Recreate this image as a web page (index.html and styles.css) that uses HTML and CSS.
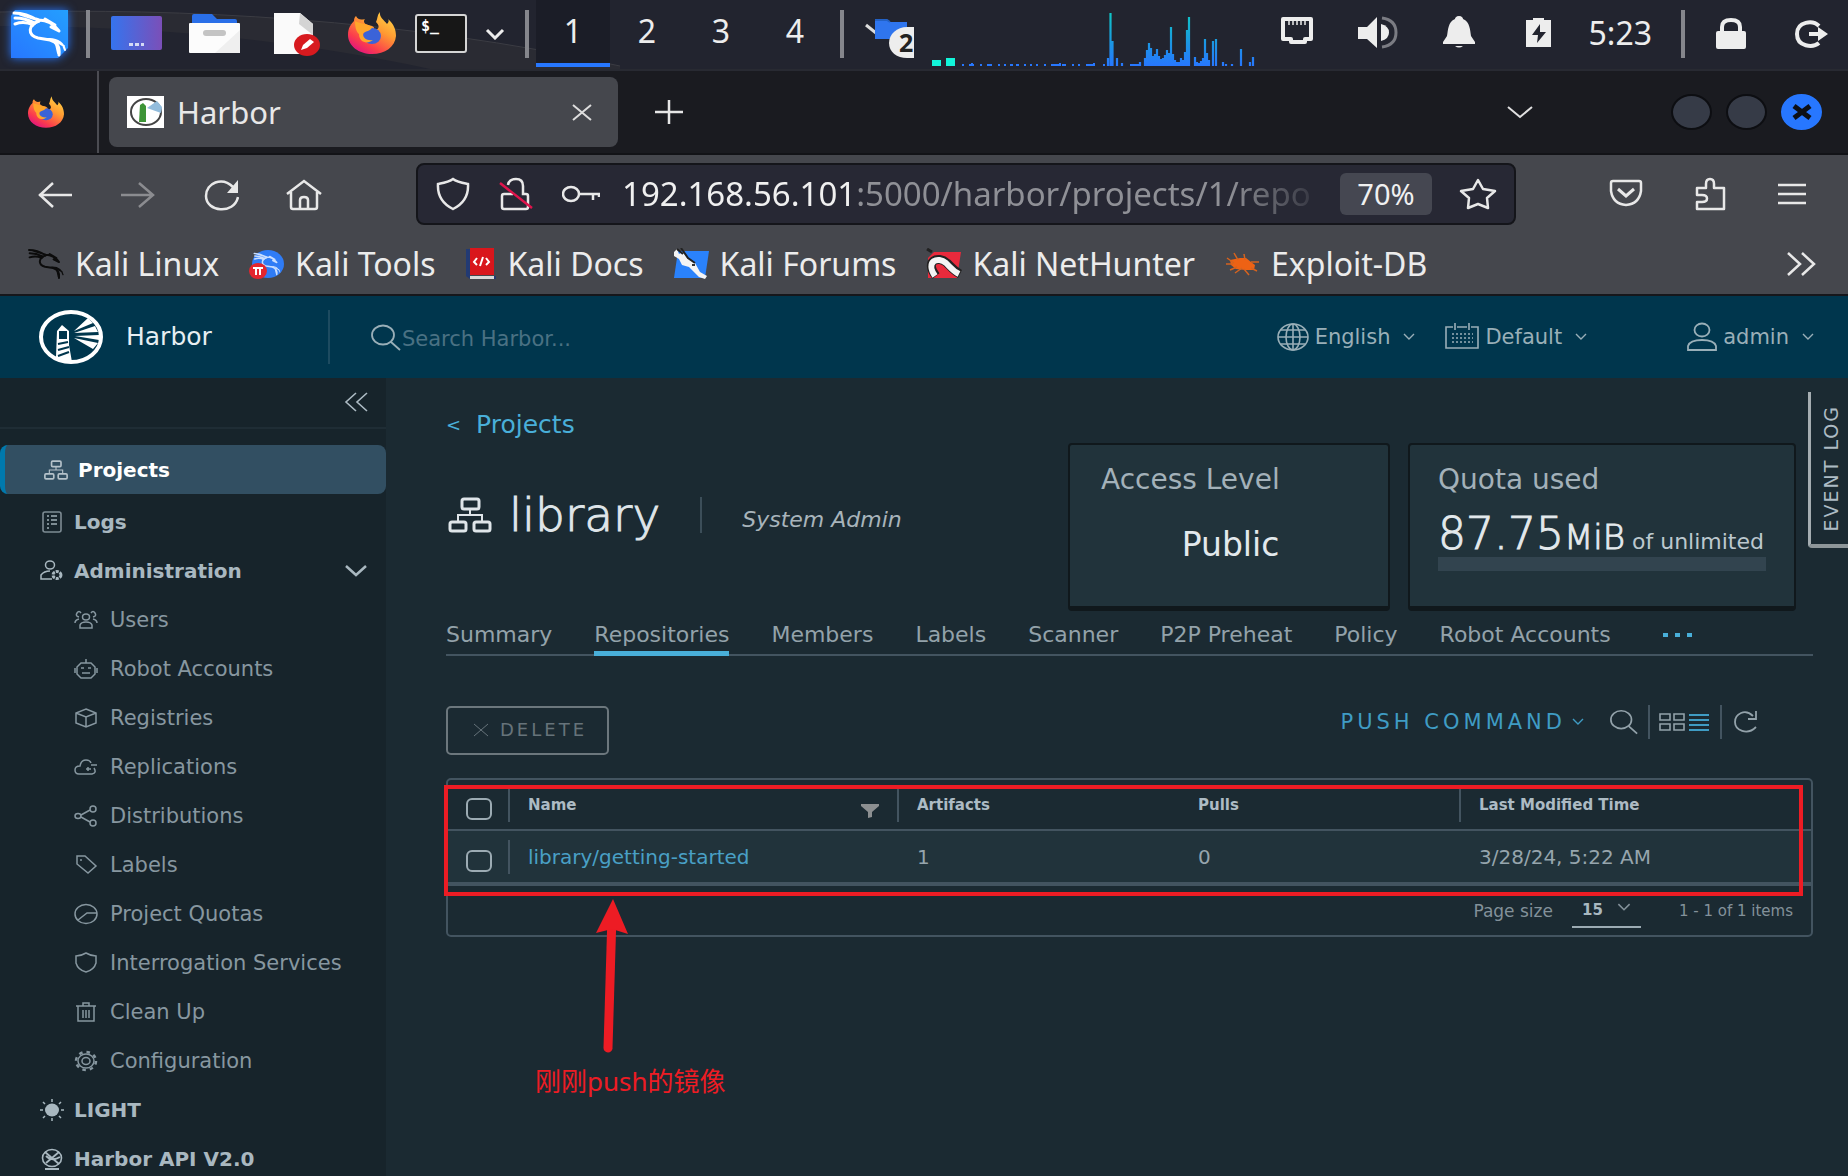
FILE: index.html
```html
<!DOCTYPE html>
<html lang="en">
<head>
<meta charset="utf-8">
<title>Harbor</title>
<link rel="stylesheet" href="styles.css">
</head>
<body>
<svg width="0" height="0" class="defs" aria-hidden="true">
  <defs>
    <linearGradient id="kali" x1="0" y1="1" x2="1" y2="0"><stop offset="0" stop-color="#2777ff"/><stop offset="1" stop-color="#249fff"/></linearGradient>
    <linearGradient id="desk" x1="0" y1="0" x2="1" y2="0"><stop offset="0" stop-color="#3574ee"/><stop offset="1" stop-color="#7b4fb8"/></linearGradient>
    <linearGradient id="fox" x1="1" y1="0" x2="0.3" y2="1"><stop offset="0" stop-color="#ffe14a"/><stop offset="0.45" stop-color="#ff9a32"/><stop offset="0.8" stop-color="#fb3d4c"/><stop offset="1" stop-color="#e3177b"/></linearGradient>
    <linearGradient id="load" gradientUnits="userSpaceOnUse" x1="0" y1="12" x2="0" y2="66"><stop offset="0" stop-color="#0ec8c4"/><stop offset="0.6" stop-color="#1c94e4"/><stop offset="1" stop-color="#2777ff"/></linearGradient>
  </defs>
  <symbol id="dragon" viewBox="0 0 57 48">
    <g fill="none" stroke="currentColor" stroke-linecap="round" stroke-linejoin="round">
      <path stroke-width="3" d="M3 3C12 3 20 6 28 11M4 8C12 8 18 10 24 13M4 14C10 12 16 12 22 15M9 4L28 10C36 10 42 13 48 21L40 17M34 9L44 15"/>
      <path stroke-width="3" d="M28 11C17 15 16 25 27 28L39 30C46 32 49 37 48 45"/>
      <path stroke-width="2" d="M36 29C48 28 53 35 54 40M44 31L53 36M45 34L47 43"/>
    </g>
  </symbol>
  <symbol id="firefox" viewBox="0 0 48 42">
    <path fill="url(#fox)" d="M32 0C31 5 36 8 39 12C41 10 41 8 40 7C46 12 48 18 48 24C47 35 37 42 24 42C11 42 0 34 0 23C0 16 3 12 6 9C6 6 7 5 8 4C10 8 13 8 17 7C15 9 16 12 20 13C25 14 28 15 25 19C34 17 30 12 28 10C30 6 29 3 32 0Z"/>
    <ellipse cx="24" cy="24" rx="9" ry="8" fill="#3b63d8"/>
    <path fill="#ffa62b" d="M7 9C13 12 21 12 24 15C24 19 16 19 15 22C15 26 19 29 25 28C19 33 11 30 11 22C8 20 7 14 7 9Z"/>
  </symbol>
  <symbol id="chev" viewBox="0 0 20 12"><path d="M2 2L10 10L18 2" fill="none" stroke="currentColor" stroke-width="3"/></symbol>
  <symbol id="chev-thin" viewBox="0 0 28 14"><path d="M2 2L14 12L26 2" fill="none" stroke="currentColor" stroke-width="2"/></symbol>
  <symbol id="chev-small" viewBox="0 0 12 8"><path d="M1 1L6 6L11 1" fill="none" stroke="currentColor" stroke-width="1.4"/></symbol>
  <symbol id="magnifier" viewBox="0 0 32 27"><g fill="none" stroke="currentColor" stroke-width="1.8"><ellipse cx="13" cy="11" rx="11" ry="9.5"/><path d="M21 18L30 26"/></g></symbol>
  <symbol id="org" viewBox="0 0 44 36"><g fill="none" stroke="currentColor" stroke-width="3"><rect x="14" y="2" width="17" height="10" rx="2"/><rect x="2" y="25" width="16" height="9" rx="2"/><rect x="26" y="25" width="16" height="9" rx="2"/></g><path d="M22 12V18M10 24V18H34V24" fill="none" stroke="currentColor" stroke-width="2"/></symbol>
</svg>

<header class="panel">
  <svg class="gleam" width="620" height="69" aria-hidden="true"><path d="M0 12C180 8 400 18 620 66L620 69H430C280 36 130 26 0 26Z" fill="#2a2b33"/><path d="M0 12C180 8 400 18 620 66" fill="none" stroke="#3b3c43"/></svg>
  <button class="kali-menu" aria-label="Applications"><svg width="57" height="48"><path d="M4 0H57V38L47 48H0V6Z" fill="url(#kali)"/><use href="#dragon" color="#fff" width="57" height="48"/></svg></button>
  <i class="sep"></i>
  <div class="launchers">
    <button aria-label="Show desktop"><svg width="58" height="48"><rect y="6" width="51" height="34" rx="2" fill="url(#desk)"/><path d="M18 33h4v3h-4zM24 33h4v3h-4zM30 33h3v3h-3z" fill="#d5daf5"/></svg></button>
    <button aria-label="Files"><svg width="58" height="48"><path d="M5 16V6Q5 4 7 4H25L30 9H48Q50 9 50 11V16Z" fill="#2a6fe8"/><rect x="2" y="13" width="51" height="30" rx="1" fill="#fcfcfc"/><path d="M53 20V43H28Z" fill="#efefef"/><rect x="16" y="20" width="23" height="6" rx="3" fill="#c4c4c4"/></svg></button>
    <button aria-label="Text editor"><svg width="58" height="48"><path d="M11 3H37L50 14V44H11Z" fill="#fafafa"/><path d="M37 3L50 14V25L36 14Z" fill="#d4d4d4"/><ellipse cx="44" cy="35" rx="13" ry="11" fill="#d71a1f"/><path d="M38 40L40 35L47 29L51 32L44 38Z" fill="#fff"/></svg></button>
    <button aria-label="Firefox"><svg width="58" height="48"><use href="#firefox" x="9" y="2" width="48" height="42"/></svg></button>
    <button aria-label="Terminal"><svg width="58" height="48"><rect x="1" y="5" width="50" height="37" rx="2" fill="#171717" stroke="#d5d5d5" stroke-width="2"/><text x="6" y="21" class="prompt">$_</text></svg></button>
    <button class="more" aria-label="More launchers"><svg width="20" height="12"><use href="#chev"/></svg></button>
  </div>
  <i class="sep"></i>
  <nav class="workspaces"><button class="current">1</button><button>2</button><button>3</button><button>4</button></nav>
  <i class="sep"></i>
  <button class="window-group" aria-label="Files, 2 windows"><svg width="50" height="42"><path d="M2 8L12 16" stroke="#ddd" stroke-width="3"/><path d="M11 3H23L26 5H43V22H11Z" fill="#2f75ee"/><path d="M11 3H23L26 5" stroke="#2361c4" fill="none" stroke-width="2"/><path d="M50 10V41H43C33 41 25 35 25 26C25 17 33 10 43 10Z" fill="#ededed"/><text x="35" y="35" class="badge">2</text></svg></button>
  <svg class="load" width="328" height="68" role="img" aria-label="System load">
    <path d="M2 60h9v6h-9zM16 58h9v8h-9z" fill="#12f5da"/>
    <path d="M32 65h2M39 65h5M42 63v3M50 65h2M57 65h5M68 65h2M74 65h2M80 65h3M86 65h3M94 65h2M100 65h2M106 65h2M114 65h2M121 65h8M130 63v3M132 65h4M142 65h2M148 65h2M156 65h7M164 63v3M173 65h2M200 65h9" stroke="#2777ff" stroke-width="2"/>
    <path transform="translate(6 0)" d="M172 66V58M174.500 66V13M176.500 66V41M181 66V58M186 66V63M204 66V62M209 66V58M211 66V50M213 66V43M215 66V48M217 66V56M219 66V54M221 66V49M223 66V56M225 66V59M227 66V58M229 66V55M231 66V50M233 66V53M235 66V27M237 66V54M239 66V60M241 66V62M243 66V62M245 66V58M247 66V60M249 66V52M251 66V30M253 66V17M259 66V57M261 66V62M263 66V63M265 66V61M267 66V58M269 66V39M271 66V53M273 66V60M277 66V41M280 66V39M287 66V62M290 66V64M296 66V64M305 66V49M314 66V62M317 66V57" stroke="url(#load)" stroke-width="2.200"/>
  </svg>
  <div class="status">
    <svg width="40" height="40"><path d="M6 6H34V26H28V29H14V26H6Z" fill="none" stroke="#ededed" stroke-width="4" stroke-linejoin="round"/><path d="M12 6v6M16 6v6M20 6v6M24 6v6M28 6v6" stroke="#ededed" stroke-width="1.500"/></svg>
    <svg width="40" height="40"><path d="M0 14H9L19 4V35L9 26H0Z" fill="#ededed"/><path d="M23 11Q31 13 31 19.500T23 28Z" fill="#ededed"/><path d="M24 5Q38 7 38 19.500T24 34" fill="none" stroke="#7b7c83" stroke-width="3"/></svg>
    <svg width="40" height="40"><path d="M20 3C23 3 24 5 24 6C31 9 31 17 32 23L36 29V31H4V29L8 23C9 17 9 9 16 6C16 5 17 3 20 3ZM16 33H24Q20 36 16 33Z" fill="#ededed"/></svg>
    <svg width="40" height="40"><path d="M6 7H13V5H24V7H31V34H6Z" fill="#ededed"/><path d="M20 11L12 22H18L17 30L26 19H20Z" fill="#22242f"/></svg>
    <time>5:23</time>
  </div>
  <i class="sep"></i>
  <div class="session">
    <button aria-label="Lock"><svg width="34" height="34"><rect x="2" y="14" width="30" height="18" rx="2" fill="#ededed"/><path d="M8 15V10Q8 3 17 3T26 10V15" fill="none" stroke="#ededed" stroke-width="4"/></svg></button>
    <button aria-label="Log out"><svg width="34" height="34"><path d="M25 9C19 3 3 4 3 17S19 31 25 26" fill="none" stroke="#ededed" stroke-width="4"/><path d="M15 15H24V10L34 17L24 24V19H15Z" fill="#ededed"/></svg></button>
  </div>
</header>

<div class="tabstrip">
  <div class="pinned"><svg width="36" height="32"><use href="#firefox" width="36" height="32"/></svg></div>
  <div class="tab">
    <svg width="37" height="32"><rect width="37" height="32" fill="#fff"/><ellipse cx="19" cy="16" rx="15" ry="13" fill="none" stroke="#444" stroke-width="2"/><path d="M13 9L16 7L19 10V26H12Z" fill="#3d9436"/><path d="M20 12L30 5L35 11L34 17Z" fill="#92bcdc"/></svg>
    <span>Harbor</span>
    <button aria-label="Close tab"><svg width="20" height="17"><path d="M1 1L19 16M19 1L1 16" stroke="#ddd" stroke-width="2"/></svg></button>
  </div>
  <button aria-label="New tab"><svg width="28" height="26"><path d="M0 13H28M14 1V25" stroke="#e6e6e6" stroke-width="2.500"/></svg></button>
  <button class="tab-list" aria-label="List all tabs"><svg width="30" height="14" color="#e0e0e0"><use href="#chev-thin" width="30" height="14"/></svg></button>
  <div class="win-buttons">
    <button aria-label="Minimise"></button><button aria-label="Maximise"></button>
    <button class="close" aria-label="Close"><svg width="20" height="16"><path d="M2 2L18 14M18 2L2 14" stroke="#0d1016" stroke-width="5"/></svg></button>
  </div>
</div>

<div class="toolbar">
  <div class="nav-buttons">
    <button aria-label="Back"><svg width="36" height="32"><path d="M2 16H35M16 4L3 16L16 28" fill="none" stroke="#e8e8e8" stroke-width="2.500"/></svg></button>
    <button aria-label="Forward"><svg width="36" height="32"><path d="M1 16H33M19 4L33 16L19 28" fill="none" stroke="#8b8c90" stroke-width="2.500"/></svg></button>
    <button aria-label="Reload"><svg width="36" height="32"><path d="M30 8C19 -3 3 4 3 17C3 33 31 36 35 18" fill="none" stroke="#e8e8e8" stroke-width="2.500"/><path d="M35 1V14H24Z" fill="#e8e8e8"/></svg></button>
    <button aria-label="Home"><svg width="36" height="32"><path d="M1 15L18 2L35 15M5 13V28Q5 30 7 30H29Q31 30 31 28V13M14 30V21Q14 18 18 18T22 21V30" fill="none" stroke="#e8e8e8" stroke-width="2.500"/></svg></button>
  </div>
  <div class="urlbar">
    <svg width="34" height="34"><path d="M17 2C21 5 27 6 32 7Q33 24 17 32Q1 24 2 7C7 6 13 5 17 2Z" fill="none" stroke="#e8e8e8" stroke-width="2.500"/></svg>
    <svg width="34" height="34"><path d="M14 17H5Q3 17 3 19V30Q3 32 5 32H27Q29 32 29 30V19Q29 17 27 17H24V9Q24 2 17 2T9 8" fill="none" stroke="#e8e8e8" stroke-width="2.500"/><path d="M1 6L33 31" stroke="#e0144c" stroke-width="2.500"/></svg>
    <svg width="38" height="34"><ellipse cx="9" cy="17" rx="8" ry="7" fill="none" stroke="#e8e8e8" stroke-width="2.500"/><path d="M17 17H37V20M31 17V23" fill="none" stroke="#e8e8e8" stroke-width="2.500"/></svg>
    <div class="address"><b>192.168.56.101</b>:5000/harbor/projects/1/repo</div>
    <button class="zoom">70%</button>
    <button class="star" aria-label="Bookmark this page"><svg width="38" height="32"><path d="M19 2L24 11L36 13L28 20L29 30L19 26L9 30L10 20L2 13L14 11Z" fill="none" stroke="#e8e8e8" stroke-width="2.500" stroke-linejoin="round"/></svg></button>
  </div>
  <div class="extras">
    <button aria-label="Pocket"><svg width="34" height="32"><path d="M4 3H30Q32 3 32 5V13Q30 26 17 27Q4 26 2 13V5Q2 3 4 3Z" fill="none" stroke="#e8e8e8" stroke-width="2.500"/><path d="M9 11L17 18L25 11" fill="none" stroke="#e8e8e8" stroke-width="3"/></svg></button>
    <button aria-label="Extensions"><svg width="34" height="34"><path d="M4 11H13V7Q13 2 17 2T21 7V11H31V32H4V25H9Q14 25 14 21.500T9 18H4Z" fill="none" stroke="#e8e8e8" stroke-width="2.500" stroke-linejoin="round"/></svg></button>
    <button aria-label="Menu"><svg width="30" height="26"><path d="M1 4H29M1 13H29M1 22H29" stroke="#e8e8e8" stroke-width="2.500"/></svg></button>
  </div>
</div>

<nav class="bookmarks">
  <a href="#"><svg width="38" height="34" color="#0c0c0c"><use href="#dragon" width="38" height="34"/></svg>Kali Linux</a>
  <a href="#"><svg width="36" height="32" color="#c9deff"><ellipse cx="19" cy="16" rx="16" ry="14" fill="#2f7cf6"/><use href="#dragon" x="2" y="4" width="32" height="24"/><ellipse cx="9" cy="23" rx="9" ry="8" fill="#e3262e"/><path d="M4 20H14M7 20V27M11 20V27" stroke="#fff" stroke-width="2"/></svg>Kali Tools</a>
  <a href="#"><svg width="32" height="32"><path d="M4 1H0V28L4 31H30V28H4Z" fill="#223a73"/><path d="M4 0H28V27H4Z" fill="#d9161c"/><path d="M4 28H28V31H4Z" fill="#d9d9d9"/><path d="M11 10L8 14L11 17M20 10L23 14L20 17M17 9L14 18" fill="none" stroke="#fff" stroke-width="2"/></svg>Kali Docs</a>
  <a href="#"><svg width="36" height="32"><path d="M4 3H35L31 30H0Z" fill="#2a82fb"/><path d="M0 4L3 1L5 6L9 4L13 10L21 15L26 24L33 28L31 31L25 29L15 19L8 17L5 11L0 8Z" fill="#f4f4f4"/><path d="M3 1L9 6M7 0L14 10L21 15" fill="none" stroke="#222" stroke-width="2"/><path d="M18 16h3v2h-3z" fill="#333"/></svg>Kali Forums</a>
  <a href="#"><svg width="36" height="32"><path d="M8 4H35L31 30H2V10Z" fill="#e92a3c"/><path d="M10 28C-2 13 12 7 21 15C26 20 28 23 34 26" fill="none" stroke="#222" stroke-width="9"/><path d="M9 28C-1 13 12 8 20 15C25 20 27 23 33 26" fill="none" stroke="#f4f4f4" stroke-width="6"/><path d="M1 1L6 4" stroke="#222" stroke-width="3"/></svg>Kali NetHunter</a>
  <a href="#"><svg width="36" height="32"><path d="M5 12L10 11L15 10L21 10L26 14L30 17L29 22L25 22L20 22L11 21L6 17Z" fill="#ee6214"/><path d="M2 10L9 15M9 5L13 12M19 6L20 12M26 14H34M5 22L12 19M10 25L17 20M19 21L24 27M26 20L32 23M1 16H8" stroke="#d5631f" stroke-width="1.500"/></svg>Exploit-DB</a>
  <button aria-label="More bookmarks"><svg width="30" height="24"><path d="M2 1L14 12L2 23M16 1L28 12L16 23" fill="none" stroke="#e8e8e8" stroke-width="2.500"/></svg></button>
</nav>

<header class="harbor-header">
  <a class="brand" href="#">
    <svg width="66" height="56"><ellipse cx="33" cy="28" rx="30" ry="25" fill="none" stroke="#fff" stroke-width="4"/><path d="M19 22L24 16L31 22V36L34 53L20 50L18 48Z" fill="#fff"/><path d="M22 23H28V29H22ZM20 35L30 33M20 41L31 38M20 47L31 43" fill="#00364d" stroke="#00364d" stroke-width="2"/><path d="M36 22L50 9L55 14ZM36 24L57 17L60 23ZM37 27L61 26V31ZM36 29L60 34L55 40Z" fill="#fff"/></svg>
    <span>Harbor</span>
  </a>
  <label class="search"><svg width="32" height="27"><use href="#magnifier"/></svg><input type="search" placeholder="Search Harbor..."></label>
  <div class="account">
    <button><svg width="32" height="28"><g fill="none" stroke="currentColor" stroke-width="1.600"><ellipse cx="16" cy="14" rx="15" ry="13"/><ellipse cx="16" cy="14" rx="7" ry="13"/><path d="M16 1V27M1 14H31M4 7H28M4 21H28"/></g></svg>English<svg class="caret" width="12" height="8"><use href="#chev-small"/></svg></button>
    <button class="scheme"><svg width="34" height="28"><g fill="none" stroke="currentColor" stroke-width="1.600"><path d="M8 4H1V25H33V4H26M12 4H22M10 0V7M24 0V7"/><path d="M7 11H28M7 15H28M7 19H28" stroke-dasharray="2 2"/></g></svg>Default<svg class="caret" width="12" height="8"><use href="#chev-small"/></svg></button>
    <button><svg width="30" height="30"><g fill="none" stroke="currentColor" stroke-width="1.800"><ellipse cx="15" cy="8" rx="7.500" ry="6.500"/><path d="M1 28V24Q3 18 15 18T29 24V28Z"/></g></svg>admin<svg class="caret" width="12" height="8"><use href="#chev-small"/></svg></button>
  </div>
</header>

<div class="app">
  <aside class="sidebar">
    <div class="collapse"><button aria-label="Collapse"><svg width="24" height="20"><path d="M12 1L2 10L12 19M23 1L13 10L23 19" fill="none" stroke="currentColor" stroke-width="1.600"/></svg></button></div>
    <nav class="menu">
      <a class="top active" href="#"><svg width="26" height="20"><use href="#org" width="26" height="20"/></svg>Projects</a>
      <a class="top" href="#"><svg width="24" height="22"><rect x="3" y="1" width="18" height="20" rx="2" fill="none" stroke="currentColor" stroke-width="1.600" opacity="0.7"/><path d="M7 5H9M11 5H17M7 9H9M11 9H17M7 13H9M11 13H17M7 17H9" stroke="currentColor" stroke-width="2" opacity="0.7"/></svg>Logs</a>
      <a class="top" href="#"><svg width="24" height="22"><g fill="none" stroke="currentColor" stroke-width="1.500"><ellipse cx="10" cy="5" rx="4.500" ry="4"/><path d="M12 19H1V15Q4 11 10 11"/><ellipse cx="17" cy="15" rx="4" ry="3.500" stroke-width="3" stroke-dasharray="3 1"/></g></svg>Administration<svg class="end" width="24" height="13"><path d="M2 2L12 11L22 2" fill="none" stroke="currentColor" stroke-width="2.500"/></svg></a>
      <a href="#"><svg width="24" height="22"><g fill="none" stroke="currentColor" stroke-width="1.500"><ellipse cx="12" cy="8" rx="3.500" ry="3"/><path d="M6 19V16Q7 13 12 13T18 16V19ZM7 4Q5 1 3 4T5 8M17 4Q19 1 21 4T19 8M1 14Q1 11 5 10M23 14Q23 11 19 10"/></g></svg>Users</a>
      <a href="#"><svg width="24" height="22"><g fill="none" stroke="currentColor" stroke-width="1.500"><path d="M7 5H17L21 9V16L17 20H7L3 16V9ZM12 5V1M1 10V15M23 10V15M8 15H16M7 10H10M14 10H17"/></g></svg>Robot Accounts</a>
      <a href="#"><svg width="24" height="22"><path d="M12 2L22 6V16L12 20L2 16V6ZM2 6L12 10L22 6M12 10V20" fill="none" stroke="currentColor" stroke-width="1.500"/></svg>Registries</a>
      <a href="#"><svg width="24" height="22"><path d="M20 12Q23 17 18 18H5Q1 18 1 14T6 10Q7 4 12 4Q16 4 17 7M12 13H17M14 11V15M17 9H23" fill="none" stroke="currentColor" stroke-width="1.500"/></svg>Replications</a>
      <a href="#"><svg width="24" height="22"><g fill="none" stroke="currentColor" stroke-width="1.500"><ellipse cx="4" cy="11" rx="3" ry="2.500"/><ellipse cx="19" cy="4" rx="3" ry="3"/><ellipse cx="19" cy="18" rx="3" ry="3"/><path d="M7 10L16 5M7 12L16 17"/></g></svg>Distributions</a>
      <a href="#"><svg width="24" height="22"><path d="M3 2H11L22 12L14 19L3 10ZM6 6H8" fill="none" stroke="currentColor" stroke-width="1.500"/></svg>Labels</a>
      <a href="#"><svg width="24" height="22"><ellipse cx="12" cy="11" rx="11" ry="9.500" fill="none" stroke="currentColor" stroke-width="1.500"/><path d="M23 10H13L4 17" fill="none" stroke="currentColor" stroke-width="1.500"/></svg>Project Quotas</a>
      <a href="#"><svg width="24" height="22"><path d="M12 1Q17 4 22 4V11Q20 18 12 20Q4 18 2 11V4Q7 4 12 1Z" fill="none" stroke="currentColor" stroke-width="1.500"/></svg>Interrogation Services</a>
      <a href="#"><svg width="24" height="22"><path d="M2 5H22M4 5V20H20V5M9 9V17M12 9V17M15 9V17M9 5V2H15V5" fill="none" stroke="currentColor" stroke-width="1.500"/></svg>Clean Up</a>
      <a href="#"><svg width="24" height="22"><g fill="none" stroke="currentColor"><ellipse cx="12" cy="11" rx="4" ry="3.500" stroke-width="1.500"/><ellipse cx="12" cy="11" rx="8" ry="7" stroke-width="1.500"/><ellipse cx="12" cy="11" rx="10" ry="9" stroke-width="2.500" stroke-dasharray="3.500 4"/></g></svg>Configuration</a>
      <a class="top" href="#"><svg width="24" height="22"><ellipse cx="12" cy="11" rx="7" ry="6.500" fill="currentColor"/><path d="M12 0V3M12 19V22M0 11H3M21 11H24M3 3L5 5M21 3L19 5M3 19L5 17M21 19L19 17" stroke="currentColor" stroke-width="1.500"/></svg>LIGHT</a>
      <a class="top" href="#"><svg width="24" height="22"><ellipse cx="12" cy="10" rx="9.500" ry="8.500" fill="none" stroke="currentColor" stroke-width="1.600"/><path d="M5 4L19 16M19 4L6 15M6 8Q12 14 20 9M5 21H19" fill="none" stroke="currentColor" stroke-width="1.800"/></svg>Harbor API V2.0</a>
    </nav>
  </aside>

  <main class="content">
    <div class="summary">
      <div>
        <a class="crumb" href="#"><span class="lt">&lt;</span>Projects</a>
        <div class="title">
          <svg width="44" height="36"><use href="#org"/></svg>
          <h1>library</h1>
          <em>System Admin</em>
        </div>
      </div>
      <div class="cards">
        <section class="card access"><h2>Access Level</h2><p>Public</p></section>
        <section class="card quota"><h2>Quota used</h2><p>87.75<span>MiB</span><small>of unlimited</small></p><div class="bar"></div></section>
      </div>
    </div>

    <nav class="tabs">
      <a href="#">Summary</a><a class="on" href="#">Repositories</a><a href="#">Members</a><a href="#">Labels</a><a href="#">Scanner</a><a href="#">P2P Preheat</a><a href="#">Policy</a><a href="#">Robot Accounts</a>
      <button aria-label="More tabs"><svg width="30" height="6"><path d="M0 1h5v4H0zM12 1h5v4h-5zM24 1h5v4h-5z" fill="currentColor"/></svg></button>
    </nav>

    <div class="actions">
      <button class="delete" disabled><svg width="16" height="14"><path d="M1 1L15 13M15 1L1 13" stroke="currentColor"/></svg>DELETE</button>
      <button class="push">PUSH COMMAND<svg width="12" height="8"><use href="#chev-small"/></svg></button>
      <button aria-label="Search"><svg width="30" height="26"><use href="#magnifier" width="30" height="26"/></svg></button>
      <div class="view">
        <button aria-label="Card view"><svg width="26" height="18"><path d="M1 1H11V7H1ZM15 1H25V7H15ZM1 11H11V17H1ZM15 11H25V17H15Z" fill="none" stroke="currentColor" stroke-width="1.600"/></svg></button>
        <button class="list" aria-label="List view"><svg width="20" height="18"><path d="M0 2H20M0 7H20M0 12H20M0 17H20" stroke="currentColor" stroke-width="2"/></svg></button>
      </div>
      <button aria-label="Refresh"><svg width="26" height="24"><path d="M20 6C12 -2 2 4 2 12S14 26 23 17M23 1V9H15" fill="none" stroke="currentColor" stroke-width="1.800"/></svg></button>
    </div>

    <div class="grid">
      <table>
        <colgroup><col class="c-check"><col class="c-name"><col class="c-num"><col class="c-num"><col></colgroup>
        <thead><tr>
          <th><input type="checkbox" aria-label="Select all"></th>
          <th><div class="cell ruled">Name<svg width="20" height="14"><path d="M1 0H19V2L12 8V13L8 14V8L1 2Z" fill="#8c8f91"/></svg></div></th>
          <th><div class="cell ruled">Artifacts</div></th>
          <th><div class="cell">Pulls</div></th>
          <th><div class="cell ruled">Last Modified Time</div></th>
        </tr></thead>
        <tbody><tr>
          <td><input type="checkbox" aria-label="Select library/getting-started"></td>
          <td><div class="cell ruled"><a href="#">library/getting-started</a></div></td>
          <td><div class="cell">1</div></td>
          <td><div class="cell">0</div></td>
          <td><div class="cell">3/28/24, 5:22 AM</div></td>
        </tr></tbody>
      </table>
      <footer>
        <label for="size">Page size</label>
        <div class="select"><select id="size"><option>15</option></select><svg width="14" height="9"><use href="#chev-small" width="14" height="9"/></svg></div>
        <span>1 - 1 of 1 items</span>
      </footer>
      <div class="mark"></div>
      <div class="note">
        <svg width="40" height="156"><path d="M20 16L16 149" stroke="#ed1c24" stroke-width="9" stroke-linecap="round"/><path d="M21 0L36 35L20 30L4 34Z" fill="#ed1c24"/></svg>
        <p lang="zh">刚刚push的镜像</p>
      </div>
    </div>
  </main>
  <button class="event-log">EVENT LOG</button>
</div>
</body>
</html>
```
FILE: styles.css
```css
* { box-sizing: border-box; }
body {
  margin: 0;
  height: 100vh;
  overflow: hidden;
  display: flex;
  flex-direction: column;
  background: #1b2a32;
  color: #adbbc4;
  font: 21px/28px "DejaVu Sans", Verdana, sans-serif;
}
.defs { position: absolute; }
svg { display: block; flex: none; }
button { padding: 0; border: 0; background: none; color: inherit; font: inherit; }
a { color: inherit; text-decoration: none; }
h1, h2, p { margin: 0; font-weight: 400; }

/* Desktop panel */
.panel {
  position: relative;
  flex: none;
  display: flex;
  align-items: center;
  height: 69px;
  padding: 0 20px 2px 11px;
  background: #22242f;
  color: #ededed;
  font: 32px/40px "Noto Sans", sans-serif;
}
.panel > * { position: relative; flex: none; }
.panel > .gleam { position: absolute; left: 0; top: 0; }
.kali-menu { filter: drop-shadow(0 0 5px #2777ff); }
.sep { width: 4px; height: 48px; background: #85868c; }
.kali-menu + .sep { margin: 0 21px 0 18px; }
.launchers { display: flex; align-items: center; gap: 18px; margin-right: 20px; }
.more { margin-left: -6px; }
.prompt { font: bold 15px "DejaVu Sans Mono", monospace; fill: #fff; }
.workspaces { display: flex; align-self: stretch; margin: 0 8px 0 7px; }
.workspaces button { width: 74px; padding-bottom: 2px; border-bottom: 4px solid transparent; }
.workspaces .current { background: #1b1d27; border-color: #2777ff; }
.window-group { margin: 8px 16px 0 20px; }
.badge { font: bold 25px "Noto Sans", sans-serif; fill: #222; }
.load { align-self: flex-start; }
.status { display: flex; align-items: center; gap: 41px; margin: 0 29px 2px auto; }
.status time { margin-left: -12px; }
.session { display: flex; gap: 46px; margin-left: 29px; }

/* Browser */
.tabstrip {
  flex: none;
  display: flex;
  align-items: center;
  height: 86px;
  padding-right: 26px;
  background: #1a1b20;
  border-top: 2px solid #282a32;
  border-bottom: 2px solid #121317;
  color: #e8e8e8;
  font: 31px/40px "Noto Sans", sans-serif;
}
.pinned { align-self: stretch; display: flex; align-items: center; width: 99px; padding-left: 28px; border-right: 2px solid #4b4c52; }
.tab {
  display: flex;
  align-items: center;
  gap: 13px;
  width: 509px;
  height: 70px;
  margin: 0 37px 0 10px;
  padding: 0 26px 0 18px;
  border-radius: 8px;
  background: #45474d;
}
.tab button { margin-left: auto; }
.tab-list { margin: 0 136px 0 auto; }
.win-buttons { display: flex; gap: 14px; }
.win-buttons button {
  display: grid;
  place-items: center;
  width: 41px;
  height: 36px;
  border: 2px solid #0d0e12;
  border-radius: 50%;
  background: #363b47;
}
.win-buttons .close { border-color: #2777ff; background: #2777ff; }
.toolbar { flex: none; display: flex; align-items: center; height: 79px; padding-bottom: 1px; background: #45474d; }
.nav-buttons { display: flex; gap: 47px; padding: 2px 94px 0 37px; }
.urlbar {
  flex: 1;
  min-width: 0;
  display: flex;
  align-items: center;
  height: 62px;
  padding: 0 17px 0 18px;
  border: 2px solid #14151a;
  border-radius: 8px;
  background: #272834;
}
.urlbar > svg { margin-right: 29px; }
.address {
  flex: 1;
  margin-left: -7px;
  white-space: nowrap;
  color: #8f9096;
  font: 33px/44px "Noto Sans", sans-serif;
  mask-image: linear-gradient(to right, #000 86%, transparent 100%);
}
.address b { color: #f0f0f0; font-weight: 400; }
.zoom {
  width: 92px;
  height: 42px;
  margin: 0 27px 0 12px;
  border-radius: 6px;
  background: #454751;
  color: #f0f0f0;
  font: 29px/40px "Noto Sans", sans-serif;
}
.extras { display: flex; align-items: center; gap: 50px; padding: 0 41px 0 93px; }
.bookmarks {
  flex: none;
  display: flex;
  align-items: center;
  gap: 30px;
  height: 62px;
  padding: 0 32px 0 27px;
  border-bottom: 2px solid #16171b;
  background: #45474d;
  color: #ececec;
  font: 32px/40px "Noto Sans", sans-serif;
}
.bookmarks a { display: flex; align-items: center; gap: 10px; white-space: nowrap; }
.bookmarks button { margin-left: auto; }

/* Harbor header */
.harbor-header {
  flex: none;
  display: flex;
  align-items: center;
  height: 82px;
  padding: 0 34px 0 38px;
  background: #00364d;
  color: #99afb8;
}
.brand { display: flex; align-items: center; gap: 22px; width: 292px; height: 54px; border-right: 2px solid #1d4b60; color: #e6eef2; font-size: 25px; }
.search { flex: 1; display: flex; align-items: center; margin-left: 40px; }
.search input { width: 400px; padding: 4px 0 0; border: 0; background: none; color: inherit; font: inherit; }
.search input::placeholder { color: #4a7183; opacity: 1; }
.account { display: flex; }
.account button { display: flex; align-items: center; gap: 6px; }
.account .caret { margin-left: 7px; }
.account .scheme { margin: 0 100px 0 30px; }

/* Shell */
.app { flex: 1; min-height: 0; display: flex; }
.sidebar { flex: none; width: 386px; background: #17242b; font-size: 20px; }
.collapse { display: flex; justify-content: flex-end; height: 51px; padding: 14px 18px 0 0; border-bottom: 2px solid #1f2d35; }
.collapse button { height: 20px; }
.menu { padding-top: 16px; }
.menu a { display: flex; align-items: center; gap: 12px; height: 49px; padding: 0 18px 0 74px; color: #8797a0; font-size: 21px; white-space: nowrap; }
.menu .top { gap: 10px; padding-left: 40px; color: #a9b8c0; font-size: 20px; font-weight: 700; }
.menu .active { gap: 9px; margin-bottom: 3px; padding-left: 38px; border-left: 5px solid #0079ad; border-radius: 8px; background: #324f62; color: #fff; }
.menu .active svg { color: #b5c2ca; }
.menu .end { margin-left: auto; }

.content { flex: 1; min-width: 0; padding: 33px 35px 0 60px; }
.summary { display: flex; justify-content: space-between; padding-right: 17px; }
.crumb { display: flex; align-items: center; gap: 15px; color: #49afd9; font-size: 25px; }
.lt { font-size: 18px; }
.title { display: flex; align-items: center; margin-top: 48px; color: #dfe5e9; white-space: nowrap; }
.title svg { margin-left: 2px; }
.title h1 { margin: 0 40px 0 17px; font-size: 47px; font-weight: 200; line-height: 56px; -webkit-text-stroke: 1px; }
.title em { padding: 10px 0 0 40px; border-left: 2px solid #3c4e59; color: #a8b4bb; font-size: 22px; line-height: 26px; }
.cards { display: flex; gap: 18px; padding-top: 32px; }
.card { height: 168px; padding: 20px 28px 0; border: 2px solid #10181c; border-bottom-width: 5px; border-radius: 4px; background: #21333b; }
.card h2 { color: #a3b1b9; font-size: 28px; line-height: 30px; }
.card p { color: #e3e9ec; white-space: nowrap; }
.access { width: 322px; padding-left: 31px; }
.access p { padding-top: 30px; text-align: center; font-size: 33px; line-height: 40px; }
.quota { width: 388px; }
.quota p { display: flex; align-items: baseline; height: 62px; padding-top: 18px; font-size: 44px; font-weight: 200; line-height: 42px; -webkit-text-stroke: 1px; }
.quota span { font-size: 34px; }
.quota small { margin-left: 7px; color: #bcc8ce; font-size: 22px; font-weight: 400; -webkit-text-stroke: 0; }
.bar { height: 14px; background: #32444f; }

.tabs { display: flex; gap: 42px; height: 45px; border-bottom: 2px solid #435460; color: #93a2aa; font-size: 22px; white-space: nowrap; }
.tabs a { height: 45px; padding-top: 10px; }
.tabs .on { border-bottom: 5px solid #49afd9; }
.tabs button { margin-left: 10px; padding-top: 4px; color: #49afd9; }

.actions { display: flex; align-items: center; height: 98px; padding: 34px 54px 0 0; color: #93a2aa; }
.actions .delete { display: flex; align-items: center; gap: 11px; height: 49px; margin: 16px auto 0 0; padding: 0 20px 0 25px; border: 2px solid #6c777d; border-radius: 5px; color: #66737a; font-size: 18px; letter-spacing: 3px; }
.actions .push { display: flex; align-items: center; gap: 6px; margin-right: 25px; color: #3f9cc4; font-size: 21px; letter-spacing: 4px; }
.view { display: flex; gap: 4px; align-items: center; height: 34px; margin: 0 11px 0 9px; padding: 0 11px 0 9px; border: 2px solid #435460; border-width: 0 2px; }
.view .list { color: #3f9cc4; }

/* Data grid */
.grid { position: relative; margin-top: 24px; border: 2px solid #435460; border-radius: 5px; }
table { width: 100%; border-collapse: collapse; table-layout: fixed; }
.c-check { width: 60px; }
.c-name { width: 389px; }
.c-num { width: 281px; }
th, td { padding: 0; text-align: left; }
th { height: 50px; border-bottom: 2px solid #435460; font-size: 15px; line-height: 34px; }
td { height: 54px; border-bottom: 4px solid #435460; background: #21333b; color: #96a5ad; font-size: 20px; line-height: 34px; }
td a { color: #49a0c6; }
.cell { display: flex; justify-content: space-between; height: 34px; padding: 0 17px 0 18px; border-left: 2px solid transparent; white-space: nowrap; }
.cell svg { align-self: flex-end; margin-bottom: 4px; }
.ruled { border-color: #435460; }
input[type="checkbox"] { appearance: none; display: block; width: 26px; height: 22px; margin: 8px 0 0 18px; border: 2px solid #9cabb3; border-radius: 6px; }
.grid footer { display: flex; align-items: center; justify-content: flex-end; height: 49px; padding-right: 18px; color: #83919a; font-size: 17px; }
.grid footer span { font-size: 15px; }
.select { position: relative; margin: 0 38px 0 19px; }
.select select { width: 69px; height: 34px; padding: 0 0 0 10px; border: 0; border-bottom: 2px solid #9cabb3; appearance: none; background: none; color: #a9b8c0; font: bold 15px/24px "DejaVu Sans", sans-serif; }
.select svg { position: absolute; right: 10px; top: 9px; }

/* Annotation over the grid */
.mark { position: absolute; inset: 5px 8px 39px -4px; border: 4px solid #ed1c24; }
.note { position: absolute; left: 87px; top: 119px; color: #ed1c24; }
.note svg { margin-left: 57px; }
.note p { margin-top: 6px; font: 26px/40px "Noto Sans", "Noto Sans CJK SC", sans-serif; white-space: nowrap; }

.event-log {
  position: absolute;
  right: 0;
  top: 392px;
  width: 40px;
  height: 156px;
  border-left: 3px solid #a5adb1;
  border-bottom: 4px solid #8e9699;
  border-bottom-left-radius: 4px;
  color: #adbbc4;
  font-size: 19px;
  letter-spacing: 2px;
  line-height: 40px;
  writing-mode: sideways-lr;
}
```
